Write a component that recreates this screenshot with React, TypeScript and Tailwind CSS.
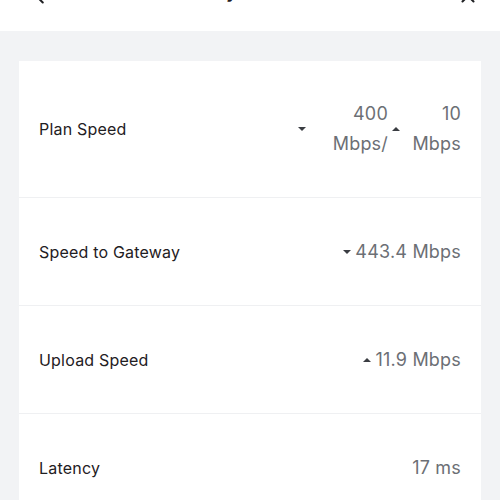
import { ChevronLeft, X } from 'lucide-react';

type Dir = 'up' | 'down';

function Caret({ dir }: { dir: Dir }) {
  return (
    <svg width="16" height="16" viewBox="0 0 16 16" className="shrink-0 text-[#3a3d42]">
      {dir === 'down' ? (
        <path d="M4 6h8l-4 4z" fill="currentColor" />
      ) : (
        <path d="M4 10h8l-4-4z" fill="currentColor" />
      )}
    </svg>
  );
}

function Row({ label, children, last }: { label: string; children: React.ReactNode; last?: boolean }) {
  return (
    <div
      className={
        'flex min-h-[108px] items-center justify-between px-5 py-[38px] ' +
        (last ? '' : 'border-b border-[#eff0f2]')
      }
    >
      <span className="text-[16px] tracking-[0.2px] text-[#1f2023]">{label}</span>
      <div className="flex items-center text-[18px] leading-[30px] tracking-[0.2px] text-[#6c6f75]">{children}</div>
    </div>
  );
}

export default function App() {
  return (
    <div className="min-h-[500px] bg-[#f2f3f5] font-['Inter',sans-serif]">
      {/* header, mostly scrolled away */}
      <div className="h-[31px] overflow-hidden bg-white">
        <div className="mt-[-25px] flex h-[28px] items-end justify-between pl-[29px] pr-[21px]">
          <ChevronLeft size={22} strokeWidth={2.2} className="mb-[-5px] text-[#1f2023]" />
          <span className="ml-[-46px] text-[18px] font-semibold leading-[22px] text-[#1f2023]">Gateway Details</span>
          <X size={22} strokeWidth={2.2} className="mb-[-4px] text-[#1f2023]" />
        </div>
      </div>

      <div className="mx-[19px] mt-[30px] bg-white">
        <Row label="Plan Speed">
          <Caret dir="down" />
          <span className="w-[78px] text-right">400 Mbps/</span>
          <Caret dir="up" />
          <span className="w-[57px] text-right">10 Mbps</span>
        </Row>
        <Row label="Speed to Gateway">
          <Caret dir="down" />
          <span>443.4 Mbps</span>
        </Row>
        <Row label="Upload Speed">
          <Caret dir="up" />
          <span>11.9 Mbps</span>
        </Row>
        <Row label="Latency" last>
          <span>17 ms</span>
        </Row>
      </div>
    </div>
  );
}
